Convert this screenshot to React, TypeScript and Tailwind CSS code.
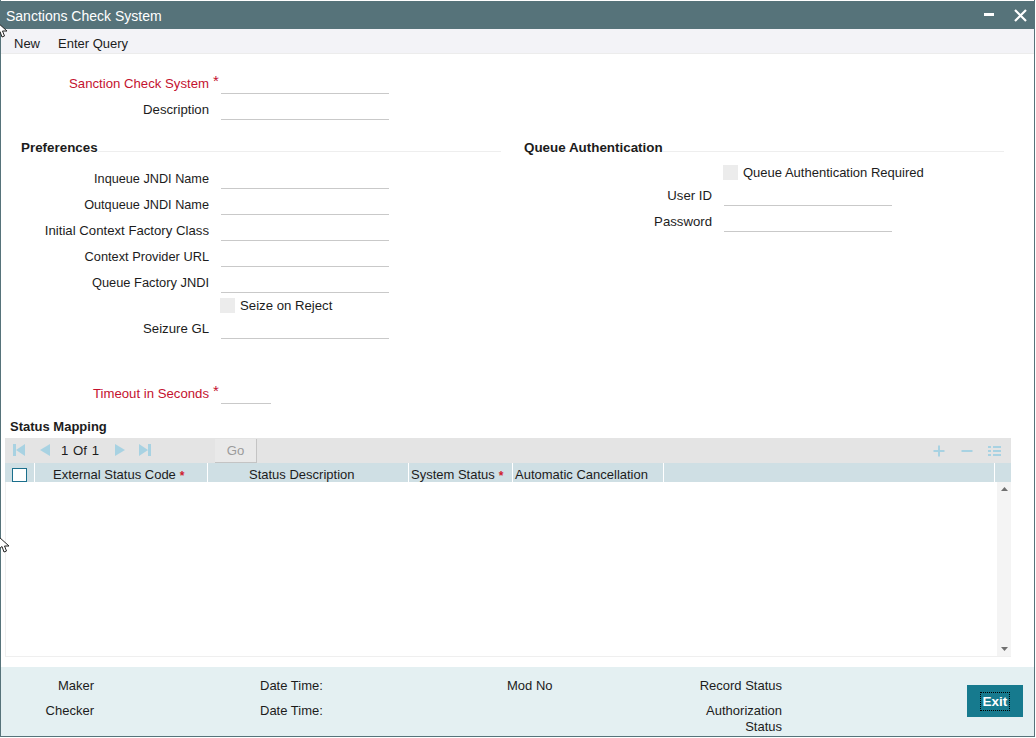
import React from 'react';

const font = { fontFamily: '"Liberation Sans", Arial, sans-serif' };

const Cursor = ({ className }: { className: string }) => (
  <svg className={className} width="12" height="18" viewBox="0 0 12 18">
    <path d="M0 0 L0 12 L3 9.5 L5 15 L7.5 14 L5.5 9 L10 9 Z" fill="#ffffff" stroke="#222222" strokeWidth="1" />
  </svg>
);

const Field = ({
  label,
  required,
  inputClass = 'w-[168px]',
  labelClass = '',
}: {
  label: string;
  required?: boolean;
  inputClass?: string;
  labelClass?: string;
}) => (
  <div className="flex h-[26px] items-start">
    <div className={`w-[208px] shrink-0 text-right leading-[28px] ${required ? 'text-[#c4122f]' : ''} ${labelClass}`}>{label}</div>
    <div className="w-[12px] shrink-0 pl-[4px] text-[15px] leading-[21px] text-[#c4122f]">{required ? '*' : ''}</div>
    <div className={`h-[24px] border-b border-[#c9c9c9] ${inputClass}`} />
  </div>
);

const SectionHead = ({ title }: { title: string }) => (
  <div className="mb-[9px] flex h-[18px]">
    <span className="text-[13.4px] font-bold leading-[20px]">{title}</span>
    <div className="h-[14px] flex-1 border-b border-[#eeeeee]" />
  </div>
);

const Check = () => <div className="h-[15px] w-[15px] shrink-0 bg-[#ececec]" />;

const navColor = '#a8d2e2';

const NavIcons = () => (
  <div className="flex items-center">
    <svg className="ml-[7px]" width="14" height="14" viewBox="0 0 14 14">
      <path d="M1 1 H4 V13 H1 Z M13 1 V13 L4 7 Z" fill={navColor} />
    </svg>
    <svg className="ml-[12px]" width="14" height="14" viewBox="0 0 14 14">
      <path d="M12 1 V13 L2 7 Z" fill={navColor} />
    </svg>
    <span className="ml-[9px] flex w-[40px] justify-between pr-[2px]">
      <span>1</span>
      <span>Of</span>
      <span>1</span>
    </span>
    <svg className="ml-[12px]" width="14" height="14" viewBox="0 0 14 14">
      <path d="M2 1 V13 L12 7 Z" fill={navColor} />
    </svg>
    <svg className="ml-[11px]" width="14" height="14" viewBox="0 0 14 14">
      <path d="M1 1 V13 L10 7 Z M10 1 H13 V13 H10 Z" fill={navColor} />
    </svg>
  </div>
);

const HeadCell = ({
  children,
  className,
}: {
  children: React.ReactNode;
  className: string;
}) => <div className={`h-full shrink-0 whitespace-nowrap border-r border-white leading-[24px] ${className}`}>{children}</div>;

const RedStar = () => <span className="relative top-[1px] ml-[4px] text-[12px] font-bold leading-none text-[#d01c2e]">*</span>;

export default function App() {
  return (
    <div className="relative h-[738px] w-[1036px] overflow-hidden bg-white text-[13.2px] text-[#1c1c1c]" style={font}>
      <div className="flex h-[737px] w-[1035px] flex-col border-b border-l border-r border-[#56737a] pt-px">
        {/* title bar */}
        <div className="flex h-[28px] shrink-0 items-center bg-[#56737a] pl-[5px] pr-[7px] text-white">
          <span className="mt-[2px] flex-1 text-[14px]">Sanctions Check System</span>
          <svg width="10" height="4" viewBox="0 0 10 4" className="mr-[20px]">
            <rect width="10" height="3" fill="#ffffff" />
          </svg>
          <svg width="13" height="13" viewBox="0 0 13 13">
            <path d="M1 1 L12 12 M12 1 L1 12" stroke="#ffffff" strokeWidth="2.2" />
          </svg>
        </div>

        {/* menu */}
        <div className="flex h-[25px] shrink-0 items-center gap-[18px] border-b border-[#ececec] bg-[#f3f3f7] pl-[13px] pt-[5px] text-[13px]">
          <span>New</span>
          <span>Enter Query</span>
        </div>

        {/* form */}
        <div className="flex-1 pt-[16px]">
          <Field label="Sanction Check System" required />
          <Field label="Description" />

          <div className="mt-[16px] flex">
            <div className="w-[523px] shrink-0">
              <div className="ml-[20px] mr-[23px]">
                <SectionHead title="Preferences" />
              </div>
              <Field label="Inqueue JNDI Name" labelClass="text-[12.7px]" />
              <Field label="Outqueue JNDI Name" labelClass="text-[12.7px]" />
              <Field label="Initial Context Factory Class" />
              <Field label="Context Provider URL" labelClass="text-[12.8px]" />
              <Field label="Queue Factory JNDI" labelClass="text-[12.85px]" />
              <div className="flex h-[20px] items-center pl-[219px]">
                <Check />
                <span className="ml-[5px] pt-[2px]">Seize on Reject</span>
              </div>
              <Field label="Seizure GL" />
            </div>
            <div className="w-[480px] shrink-0">
              <SectionHead title="Queue Authentication" />
              <div className="mb-[2px] flex h-[15px] items-center pl-[199px] text-[13px]">
                <Check />
                <span className="ml-[5px]">Queue Authentication Required</span>
              </div>
              <div className="-ml-[20px]">
                <div className="flex h-[26px] items-start">
                  <div className="w-[208px] text-right leading-[28px]">User ID</div>
                  <div className="ml-[12px] h-[24px] w-[168px] border-b border-[#c9c9c9]" />
                </div>
                <div className="flex h-[26px] items-start">
                  <div className="w-[208px] text-right leading-[28px]">Password</div>
                  <div className="ml-[12px] h-[24px] w-[168px] border-b border-[#c9c9c9]" />
                </div>
              </div>
            </div>
          </div>

          <div className="mt-[39px]">
            <Field label="Timeout in Seconds" required inputClass="w-[50px]" />
          </div>

          <div className="mt-[11px] pl-[9px] text-[13px] font-bold leading-[20px]">Status Mapping</div>

          {/* grid */}
          <div className="ml-[4px] mt-[1px] w-[1006px]">
            <div className="flex h-[25px] items-center bg-[#e4e4e4]">
              <NavIcons />
              <div className="ml-[63px] mt-[1px] flex h-[24px] w-[42px] items-center justify-center border-b border-r border-[#c4c4c4] bg-[#e9e9e9] text-[#9b9b9b]">
                Go
              </div>
              <div className="flex-1" />
              <svg width="12" height="12" viewBox="0 0 12 12" className="mr-[16px]">
                <path d="M6 0.5 V11.5 M0.5 6 H11.5" stroke={navColor} strokeWidth="2" />
              </svg>
              <svg width="12" height="12" viewBox="0 0 12 12" className="mr-[15px]">
                <path d="M0.5 6 H11.5" stroke={navColor} strokeWidth="2" />
              </svg>
              <svg width="13" height="12" viewBox="0 0 13 12" className="mr-[10px]">
                <path d="M0 2 H3 M5 2 H13 M0 6 H3 M5 6 H13 M0 10 H3 M5 10 H13" stroke={navColor} strokeWidth="2" />
              </svg>
            </div>
            <div className="flex h-[19px] bg-[#cfdfe4] text-[13px]">
              <HeadCell className="w-[30px] pl-[7px] pt-[5px]">
                <div className="h-[14px] w-[15px] border-[1.5px] border-[#1b6f8c] bg-white" />
              </HeadCell>
              <HeadCell className="w-[173px] pl-[18px]">
                External Status Code
                <RedStar />
              </HeadCell>
              <HeadCell className="w-[201px] pl-[41px]">Status Description</HeadCell>
              <HeadCell className="w-[104px] pl-[2px]">
                System Status
                <RedStar />
              </HeadCell>
              <HeadCell className="w-[151px] pl-[2px]">Automatic Cancellation</HeadCell>
              <HeadCell className="w-[331px]">{''}</HeadCell>
            </div>
            <div className="flex h-[175px] border-b border-l border-[#efefef]">
              <div className="flex-1" />
              <div className="flex w-[14px] flex-col items-center justify-between bg-[#f4f4f4] py-[5px]">
                <svg width="7" height="4" viewBox="0 0 7 4">
                  <path d="M3.5 0 L7 4 H0 Z" fill="#707070" />
                </svg>
                <svg width="7" height="4" viewBox="0 0 7 4">
                  <path d="M0 0 H7 L3.5 4 Z" fill="#707070" />
                </svg>
              </div>
            </div>
          </div>
        </div>

        {/* footer */}
        <div className="flex h-[69px] shrink-0 bg-[#e4f0f2] pt-[11px] text-[13px]">
          <div className="flex w-[93px] flex-col gap-[9px] text-right leading-[16px]">
            <span>Maker</span>
            <span>Checker</span>
          </div>
          <div className="ml-[166px] flex w-[247px] flex-col gap-[9px] leading-[16px]">
            <span>Date Time:</span>
            <span>Date Time:</span>
          </div>
          <div className="w-[120px] leading-[16px]">Mod No</div>
          <div className="flex w-[155px] flex-col gap-[9px] text-right leading-[16px]">
            <span>Record Status</span>
            <span>
              Authorization
              <br />
              Status
            </span>
          </div>
          <div className="ml-[185px] mt-[7px] flex h-[32px] w-[56px] items-center justify-center bg-[#167a8e]">
            <span className="border border-dotted border-black px-[2px] text-[13.5px] font-bold leading-[17px] text-white">Exit</span>
          </div>
        </div>
      </div>

      <Cursor className="absolute left-[-3px] top-[22px]" />
      <Cursor className="absolute left-[-1px] top-[537px]" />
    </div>
  );
}
